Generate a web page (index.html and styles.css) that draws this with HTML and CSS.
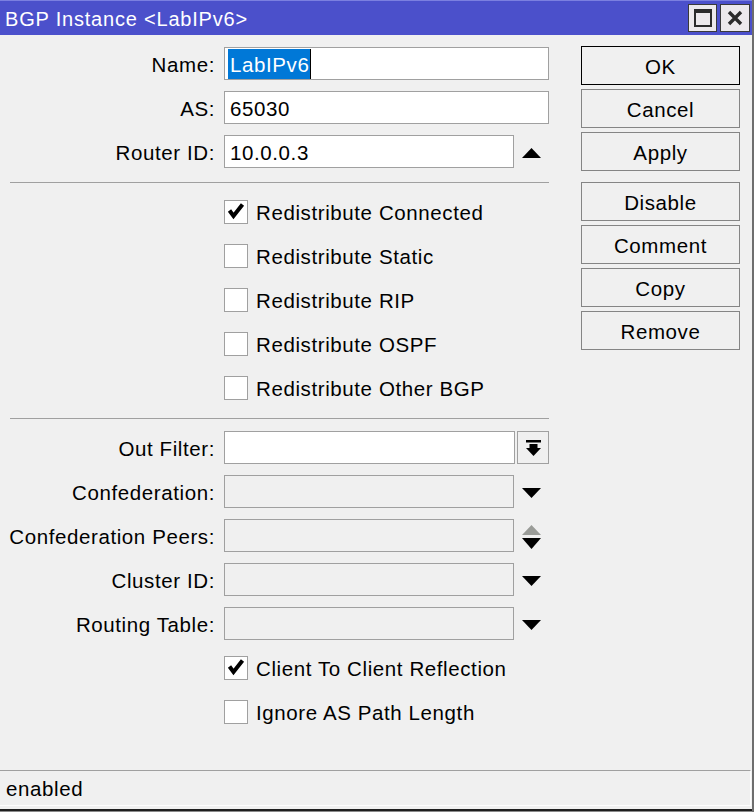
FILE: index.html
```html
<!DOCTYPE html>
<html>
<head>
<meta charset="utf-8">
<title>BGP Instance</title>
<link rel="stylesheet" href="styles.css">
</head>
<body>
<div class="window">
  <div class="titlebar">
    <span class="title">BGP Instance &lt;LabIPv6&gt;</span>
    <div class="tbtns">
      <div class="tbtn max">
        <svg width="18" height="18" viewBox="0 0 18 18"><rect x="1" y="1" width="16" height="16" fill="none" stroke="#2b2b2b" stroke-width="2"/><rect x="0" y="0" width="18" height="4" fill="#2b2b2b"/></svg>
      </div>
      <div class="tbtn close">
        <svg width="16" height="16" viewBox="0 0 16 16"><path d="M2 2 L14 14 M14 2 L2 14" stroke="#2b2b2b" stroke-width="3.4" fill="none"/></svg>
      </div>
    </div>
  </div>

  <div class="main">
    <div class="form">
      <div class="row">
        <div class="label">Name:</div>
        <div class="field w325 namefield"><span class="sel">LabIPv6</span></div>
      </div>
      <div class="row">
        <div class="label">AS:</div>
        <div class="field w325">65030</div>
      </div>
      <div class="row">
        <div class="label">Router ID:</div>
        <div class="field w290">10.0.0.3</div>
        <div class="arrow"><svg width="19" height="10" viewBox="0 0 19 10"><polygon points="0,10 19,10 9.5,0" fill="#000"/></svg></div>
      </div>

      <div class="sep"></div>

      <div class="row check">
        <div class="box"><svg width="22" height="22" viewBox="0 0 22 22"><polyline points="4.5,9.5 8.5,15 17.5,3.5" fill="none" stroke="#000" stroke-width="4"/></svg></div>
        <span class="clabel">Redistribute Connected</span>
      </div>
      <div class="row check">
        <div class="box"></div>
        <span class="clabel">Redistribute Static</span>
      </div>
      <div class="row check">
        <div class="box"></div>
        <span class="clabel">Redistribute RIP</span>
      </div>
      <div class="row check">
        <div class="box"></div>
        <span class="clabel">Redistribute OSPF</span>
      </div>
      <div class="row check">
        <div class="box"></div>
        <span class="clabel">Redistribute Other BGP</span>
      </div>

      <div class="sep"></div>

      <div class="row">
        <div class="label">Out Filter:</div>
        <div class="field w291"></div>
        <div class="pick"><svg width="15" height="16" viewBox="0 0 15 16"><rect x="0" y="0" width="15" height="2.5" fill="#000"/><rect x="3.5" y="4" width="8" height="4.5" fill="#000"/><polygon points="0,8 15,8 7.5,16" fill="#000"/></svg></div>
      </div>
      <div class="row">
        <div class="label">Confederation:</div>
        <div class="field w290 disabled"></div>
        <div class="arrow"><svg width="19" height="10" viewBox="0 0 19 10"><polygon points="0,0 19,0 9.5,10" fill="#000"/></svg></div>
      </div>
      <div class="row">
        <div class="label">Confederation Peers:</div>
        <div class="field w290 disabled"></div>
        <div class="arrow"><svg width="19" height="24" viewBox="0 0 19 24"><polygon points="0,10 19,10 9.5,0" fill="#9a9c98"/><polygon points="0,13 19,13 9.5,24" fill="#000"/></svg></div>
      </div>
      <div class="row">
        <div class="label">Cluster ID:</div>
        <div class="field w290 disabled"></div>
        <div class="arrow"><svg width="19" height="10" viewBox="0 0 19 10"><polygon points="0,0 19,0 9.5,10" fill="#000"/></svg></div>
      </div>
      <div class="row">
        <div class="label">Routing Table:</div>
        <div class="field w290 disabled"></div>
        <div class="arrow"><svg width="19" height="10" viewBox="0 0 19 10"><polygon points="0,0 19,0 9.5,10" fill="#000"/></svg></div>
      </div>

      <div class="row check">
        <div class="box"><svg width="22" height="22" viewBox="0 0 22 22"><polyline points="4.5,9.5 8.5,15 17.5,3.5" fill="none" stroke="#000" stroke-width="4"/></svg></div>
        <span class="clabel">Client To Client Reflection</span>
      </div>
      <div class="row check">
        <div class="box"></div>
        <span class="clabel">Ignore AS Path Length</span>
      </div>
    </div>

    <div class="buttons">
      <div class="btn default">OK</div>
      <div class="btn">Cancel</div>
      <div class="btn">Apply</div>
      <div class="btn group">Disable</div>
      <div class="btn">Comment</div>
      <div class="btn">Copy</div>
      <div class="btn">Remove</div>
    </div>
  </div>

  <div class="status">enabled</div>
  <div class="frame-bottom"></div>
</div>
</body>
</html>
```

FILE: styles.css
```css
html, body {
  margin: 0;
  padding: 0;
  background: #f0f0f0;
}

body {
  font-family: "Liberation Sans", Arial, sans-serif;
  font-size: 20.5px;
  letter-spacing: 0.6px;
  color: #000;
}

.window {
  width: 754px;
  height: 812px;
  box-sizing: border-box;
  border-right: 2px solid #6e6e6e;
  display: flex;
  flex-direction: column;
  background: #f0f0f0;
}

/* title bar */
.titlebar {
  height: 35px;
  flex: none;
  box-sizing: border-box;
  border-top: 1px solid #7b7fe0;
  background: #4b50cb;
  display: flex;
  justify-content: space-between;
  align-items: flex-start;
  padding: 3px 2px 0 5px;
}

.title {
  color: #fff;
  font-size: 20px;
  line-height: 31px;
  letter-spacing: 0.8px;
}

.tbtns {
  display: flex;
  gap: 3px;
}

.tbtn {
  height: 28px;
  box-sizing: border-box;
  border: 1px solid #3a3a3a;
  background: #ece9ec;
  display: flex;
  align-items: center;
  justify-content: center;
}

.tbtn.max { width: 29px; }
.tbtn.close { width: 30px; }

/* main area */
.main {
  flex: 1;
  display: flex;
  align-items: flex-start;
}

.form {
  width: 549px;
  flex: none;
  padding-top: 12px;
}

.row {
  display: flex;
  align-items: center;
  height: 33px;
  margin-bottom: 11px;
}

.label {
  width: 224px;
  box-sizing: border-box;
  padding-right: 9px;
  padding-top: 3px;
  text-align: right;
  white-space: nowrap;
}

.field {
  height: 33px;
  box-sizing: border-box;
  border: 1px solid #a0a0a0;
  background: #fff;
  padding-left: 5px;
  padding-top: 2px;
  display: flex;
  align-items: center;
  white-space: nowrap;
}

.field.disabled { background: #f0f0f0; }

.w325 { width: 325px; }
.w290 { width: 290px; }
.w291 { width: 291px; }

.namefield { padding-left: 3px; padding-top: 0; }

.sel {
  background: #0078d7;
  color: #fff;
  line-height: 29px;
  padding: 1px 1px 0 2px;
  border-right: 1px solid #000;
}

.arrow {
  width: 35px;
  display: flex;
  justify-content: center;
  align-items: center;
  padding-top: 2px;
}

.arrow svg { display: block; }

.pick {
  width: 32px;
  height: 33px;
  box-sizing: border-box;
  margin-left: 2px;
  border: 1px solid #a0a0a0;
  background: #f0f0f0;
  display: flex;
  align-items: center;
  justify-content: center;
}

.pick svg { display: block; }

/* margins collapse with the row's 11px bottom margin */
.sep {
  height: 1px;
  background: #a0a0a0;
  margin: 14px 0 12px 10px;
}

.check {
  padding-left: 224px;
}

.box {
  width: 24px;
  height: 24px;
  box-sizing: border-box;
  border: 1px solid #a0a0a0;
  background: #fff;
  display: flex;
  align-items: center;
  justify-content: center;
}

.box svg { display: block; }

.clabel {
  margin-left: 8px;
  padding-top: 3px;
  white-space: nowrap;
}

/* buttons column */
.buttons {
  margin-left: 32px;
  padding-top: 11px;
  display: flex;
  flex-direction: column;
  gap: 4px;
}

.btn {
  width: 159px;
  height: 39px;
  box-sizing: border-box;
  border: 1px solid #858585;
  background: #f0f0f0;
  padding-top: 2px;
  display: flex;
  align-items: center;
  justify-content: center;
}

.btn.default { border-color: #000; }
.btn.group { margin-top: 7px; }

/* status bar */
.status {
  flex: none;
  height: 36px;
  box-sizing: border-box;
  border-top: 1px solid #a0a0a0;
  border-bottom: 1px solid #fdfdfd;
  border-right: 1px solid #fdfdfd;
  margin-right: 1px;
  padding-left: 6px;
  line-height: 36px;
}

.frame-bottom {
  flex: none;
  height: 6px;
  box-sizing: border-box;
  border-top: 3px solid #f0f0f0;
  border-bottom: 1px solid #8a8a8a;
  background: #1e1e1e;
}
```
